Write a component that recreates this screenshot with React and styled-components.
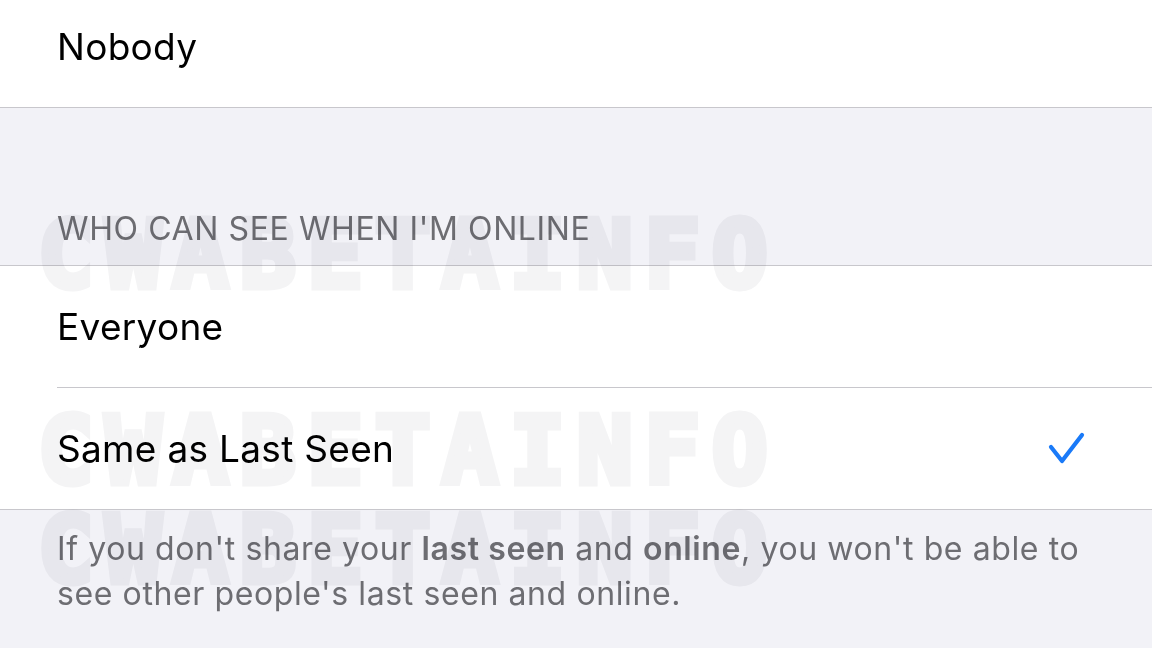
import React from 'react';
import styled, { createGlobalStyle } from 'styled-components';

const GlobalStyle = createGlobalStyle`
    html, body {
        margin: 0;
        padding: 0;
        background: #f2f2f7;
        font-family: Inter, "Liberation Sans", sans-serif;
        -webkit-font-smoothing: antialiased;
    }
`;

const Screen = styled.div`
    position: relative;
    width: 1152px;
    height: 648px;
    overflow: hidden;
    background: #f2f2f7;
`;

const Group = styled.section`
    background: #fff;
    border-top: ${props => (props.noTop ? 'none' : '1px solid #c8c7cc')};
    border-bottom: 1px solid #c8c7cc;
    margin-top: ${props => props.offset || 0}px;
`;

const Row = styled.div`
    padding-left: 57px;
`;

const RowInner = styled.div`
    height: 121px;
    display: flex;
    align-items: center;
    justify-content: space-between;
    padding-right: 66px;
    border-bottom: ${props => (props.last ? 'none' : '1px solid #c8c7cc')};
`;

const Label = styled.span`
    font-size: 37px;
    color: #000;
    letter-spacing: 0.3px;
`;

const Gap = styled.div`
    height: 157px;
    display: flex;
    align-items: flex-end;
    padding: 0 57px 17px;
    box-sizing: border-box;
`;

const SectionHeader = styled.h3`
    margin: 0;
    font-size: 32px;
    font-weight: 400;
    color: #6d6d72;
    letter-spacing: 0.6px;
`;

const Footer = styled.p`
    margin: 0;
    padding: 16px 57px 0;
    font-size: 32px;
    line-height: 45px;
    color: #6d6d72;
    letter-spacing: 0.6px;

    b {
        font-weight: 600;
    }
`;

const Watermark = styled.div`
    position: absolute;
    left: 38px;
    top: ${props => props.top}px;
    font-family: "DejaVu Sans Mono", monospace;
    font-weight: bold;
    font-size: 92px;
    line-height: 68px;
    letter-spacing: 12px;
    color: #f4f4f5;
    -webkit-text-stroke: 7px #f4f4f5;
    mix-blend-mode: multiply;
    pointer-events: none;
    white-space: nowrap;
    user-select: none;
`;

const Check = () => (
    <svg width="38" height="34" viewBox="0 0 38 34" fill="none">
        <path d="M3 15 L14 29 L34 3" stroke="#1a7af8" strokeWidth="4.2" strokeLinecap="round" strokeLinejoin="round" />
    </svg>
);

export default function App() {
    return (
        <Screen>
            <GlobalStyle />
            <Group noTop offset={-14}>
                <Row>
                    <RowInner last>
                        <Label>Nobody</Label>
                    </RowInner>
                </Row>
            </Group>

            <Gap>
                <SectionHeader>WHO CAN SEE WHEN I'M ONLINE</SectionHeader>
            </Gap>

            <Group>
                <Row>
                    <RowInner>
                        <Label>Everyone</Label>
                    </RowInner>
                </Row>
                <Row>
                    <RowInner last>
                        <Label>Same as Last Seen</Label>
                        <Check />
                    </RowInner>
                </Row>
            </Group>

            <Footer>
                If you don't share your <b>last seen</b> and <b>online</b>, you won't be able to see other people's last seen and online.
            </Footer>

            <Watermark top={222} aria-hidden="true">CWABETAINFO</Watermark>
            <Watermark top={418} aria-hidden="true">CWABETAINFO</Watermark>
            <Watermark top={517} aria-hidden="true">CWABETAINFO</Watermark>
        </Screen>
    );
}
